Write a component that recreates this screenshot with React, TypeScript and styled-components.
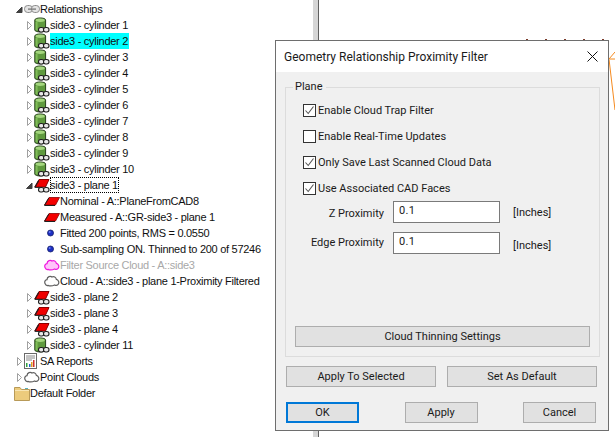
import React from "react";
import styled, { createGlobalStyle } from "styled-components";

const GlobalStyle = createGlobalStyle`
  html, body {
    margin: 0;
    padding: 0;
    background: #ffffff;
    overflow: hidden;
  }
`;

const Page = styled.div`
  position: relative;
  display: flex;
  width: 615px;
  height: 437px;
  overflow: hidden;
  background: #ffffff;
`;

const TreePane = styled.div`
  width: 313px;
  padding-top: 1px;
  font-family: "Liberation Sans", Arial, sans-serif;
  font-size: 11px;
  letter-spacing: -0.28px;
  color: #101010;
`;

const Divider = styled.div`
  width: 5px;
  background: #d6d6d6;
  border-right: 1px solid #606060;
`;

const Viewport = styled.div`
  position: relative;
  flex: 1;
`;

const Row = styled.div<{ $level: number }>`
  display: flex;
  align-items: center;
  height: 16px;
  padding-left: ${(p) => 4 + p.$level * 10}px;
  white-space: nowrap;
`;

const ArrowSlot = styled.span`
  display: flex;
  align-items: center;
  justify-content: center;
  width: 10px;
  height: 16px;
  flex: none;
`;

const IconSlot = styled.span`
  display: block;
  width: 16px;
  height: 16px;
  flex: none;
`;

const Label = styled.span<{ $selected?: boolean; $focused?: boolean; $muted?: boolean }>`
  display: block;
  height: 16px;
  line-height: 16px;
  box-sizing: border-box;
  padding: 0 1px 0 0;
  background: ${(p) => (p.$selected ? "#00ffff" : "transparent")};
  outline: ${(p) => (p.$focused ? "1px dotted #000" : "none")};
  outline-offset: -1px;
  color: ${(p) => (p.$muted ? "#a8a8a8" : "inherit")};
`;

const Dialog = styled.div`
  position: absolute;
  left: 275px;
  top: 40px;
  width: 334px;
  height: 391px;
  box-sizing: border-box;
  border: 1px solid #6e6e6e;
  background: #f0f0f0;
  display: flex;
  flex-direction: column;
  font-family: Roboto, "Noto Sans", sans-serif;
  font-size: 11px;
  color: #1a1a1a;
`;

const TitleBar = styled.div`
  display: flex;
  align-items: center;
  justify-content: space-between;
  height: 31px;
  flex: none;
  padding: 0 10px 0 8px;
  background: #ffffff;
  font-size: 12px;
`;

const Body = styled.div`
  display: flex;
  flex-direction: column;
  padding: 8px 8px 0 9px;
`;

const Group = styled.fieldset`
  margin: 0;
  padding: 0 9px 10px 9px;
  height: 277px;
  box-sizing: border-box;
  border: 1px solid #dcdcdc;
  min-width: 0;
`;

const Legend = styled.legend`
  padding: 0 3px 0 2px;
  margin-left: -2px;
  line-height: 14px;
`;

const Options = styled.div`
  display: flex;
  flex-direction: column;
  gap: 10px;
  padding: 8px 0 0 8px;
`;

const CheckRow = styled.label`
  display: flex;
  align-items: center;
  gap: 2px;
  height: 16px;
`;

const Box = styled.span`
  display: block;
  width: 13px;
  height: 13px;
  flex: none;
  box-sizing: border-box;
  border: 1px solid #333;
  background: #fff;
`;

const Fields = styled.div`
  display: grid;
  grid-template-columns: 89px 107px auto;
  column-gap: 9px;
  row-gap: 9px;
  margin-top: 5px;
  align-items: center;
`;

const FieldLabel = styled.span<{ $raised?: boolean }>`
  text-align: right;
  margin-right: 0;
  margin-top: ${(p) => (p.$raised ? 0 : 2)}px;
  margin-bottom: ${(p) => (p.$raised ? 2 : 0)}px;
`;

const FieldInput = styled.div`
  box-sizing: border-box;
  height: 22px;
  border: 1px solid #7a7a7a;
  background: #fff;
  padding: 2px 0 0 5px;
  line-height: 14px;
  letter-spacing: 0.3px;
`;

const Unit = styled.span<{ $low?: boolean }>`
  margin-left: 4px;
  margin-top: ${(p) => (p.$low ? 4 : 0)}px;
`;

const Button = styled.div<{ $primary?: boolean }>`
  display: flex;
  align-items: center;
  justify-content: center;
  box-sizing: border-box;
  height: 21px;
  background: #e1e1e1;
  border: ${(p) => (p.$primary ? "2px solid #0078d7" : "1px solid #adadad")};
`;

const ThinningButton = styled(Button)`
  margin-top: 72px;
`;

const ActionRow = styled.div`
  display: grid;
  grid-template-columns: 150px 150px;
  justify-content: space-between;
  margin: 9px 3px 0 1px;
`;

const FooterRow = styled.div`
  display: grid;
  grid-template-columns: 73px 73px 73px;
  justify-content: space-between;
  margin: 15px 4px 0 1px;
`;

const Overlay = styled.svg`
  position: absolute;
  left: 0;
  top: 0;
  display: block;
`;

const Arrow = ({ open }: { open?: boolean }) => (
  <svg width="7" height="9" viewBox="0 0 7 9">
    {open ? (
      <path d="M0.5 7.5 L6 7.5 L6 2 Z" fill="#404040" stroke="#404040" />
    ) : (
      <path d="M1.5 0.5 L5.5 4.5 L1.5 8.5 Z" fill="#fff" stroke="#a0a0a0" />
    )}
  </svg>
);

const Chain = () => (
  <g fill="#e8e8e8" stroke="#202020" strokeWidth="1.1">
    <rect x="4.5" y="10.5" width="5.5" height="4.5" rx="2.2" />
    <rect x="9.5" y="10.5" width="5.5" height="4.5" rx="2.2" />
  </g>
);

const CylinderIcon = () => (
  <svg width="16" height="16" viewBox="0 0 16 16">
    <path d="M0.8 3 C0.8 0.3 11.6 0.3 11.6 3 L11.6 13 C11.6 15.6 0.8 15.6 0.8 13 Z" fill="#5f9a3e" stroke="#26401a" />
    <ellipse cx="6.2" cy="3.2" rx="4.6" ry="1.7" fill="#a4d67e" />
    <rect x="1.6" y="5" width="2" height="8" fill="#80bc58" />
    <Chain />
  </svg>
);

const PlaneLinkIcon = () => (
  <svg width="16" height="16" viewBox="0 0 16 16">
    <path d="M0.8 10 L5 2.5 L15 2.5 L11.5 10 Z" fill="#f00000" stroke="#8a0000" />
    <path d="M0.8 10.5 L4.8 3.5" stroke="#202020" strokeWidth="1.2" />
    <rect x="1" y="10" width="5" height="1" fill="#303030" />
    <Chain />
  </svg>
);

const PlaneIcon = () => (
  <svg width="16" height="16" viewBox="0 0 16 16">
    <path d="M0.5 12 L5 4.5 L15.5 4.5 L11.5 12 Z" fill="#f40000" stroke="#8a0000" strokeWidth="0.8" />
    <path d="M0.5 12.4 L4.8 5 M0.5 12.5 L11 12.5" stroke="#202020" strokeWidth="1" />
  </svg>
);

const DotIcon = () => (
  <svg width="16" height="16" viewBox="0 0 16 16">
    <circle cx="6.5" cy="8" r="3" fill="#1c2fc4" stroke="#16206a" strokeWidth="0.8" />
    <circle cx="5.7" cy="7" r="1" fill="#6a7cf0" />
  </svg>
);

const CloudIcon = ({ pink }: { pink?: boolean }) => (
  <svg width="16" height="16" viewBox="0 0 16 16">
    <path
      d="M1 10.5 C0.2 8.5 1.4 6.8 3 6.6 C3.2 3.6 6.4 2.6 8 4 C9.8 3 12 4.2 12.4 6.4 C14.4 6.6 15.4 9.4 14.4 11 C13.6 12.6 11.8 12.6 10.5 12 C8.5 13 5.5 13 4 12.4 C2.8 12.8 1.6 12 1 10.5 Z"
      fill={pink ? "#ffc4fa" : "#ffffff"}
      stroke={pink ? "#f018e0" : "#606060"}
      strokeWidth="1.2"
    />
  </svg>
);

const LinkIcon = () => (
  <svg width="16" height="16" viewBox="0 0 16 16">
    <g fill="#e4e4e4" stroke="#8c8c8c" strokeWidth="1">
      <rect x="0.5" y="4.5" width="8" height="7" rx="3.2" />
      <rect x="7.5" y="4.5" width="8" height="7" rx="3.2" />
    </g>
    <rect x="4" y="7.5" width="8" height="1.2" fill="#707070" />
  </svg>
);

const ReportIcon = () => (
  <svg width="16" height="16" viewBox="0 0 16 16">
    <rect x="0.5" y="0.5" width="12" height="15" fill="#fff" stroke="#6a6a6a" />
    <path d="M2 3 H11 M2 5 H11 M2 7 H8" stroke="#8a8a8a" />
    <rect x="5" y="11" width="1.5" height="3" fill="#2060d0" />
    <rect x="7" y="9" width="1.5" height="5" fill="#e0a020" />
    <rect x="9" y="7" width="1.5" height="7" fill="#d03030" />
    <rect x="2" y="10" width="1.5" height="4" fill="#30a040" />
  </svg>
);

const FolderIcon = () => (
  <svg width="16" height="16" viewBox="0 0 16 16">
    <path d="M0.5 2.5 H6 L7.5 4.5 H15.5 V15.5 H0.5 Z" fill="#eccb7c" stroke="#b89a58" />
    <rect x="11" y="3" width="3" height="1" fill="#5ab0b8" />
    <rect x="1" y="5" width="14" height="1" fill="#f8e6b4" />
  </svg>
);

const Check = ({ checked }: { checked: boolean }) => (
  <Box>
    {checked && (
      <svg width="11" height="11" viewBox="0 0 11 11" style={{ display: "block" }}>
        <path d="M1.5 5.5 L4.2 8.5 L9.5 1.5" fill="none" stroke="#555" strokeWidth="1.1" />
      </svg>
    )}
  </Box>
);

type Node = {
  level: number;
  text: string;
  icon: React.ReactNode;
  arrow?: "open" | "closed";
  selected?: boolean;
  focused?: boolean;
  muted?: boolean;
};

const cylinder = (n: number, selected?: boolean): Node => ({
  level: 2,
  text: `side3 - cylinder ${n}`,
  icon: <CylinderIcon />,
  arrow: "closed",
  selected,
});

const plane = (n: number): Node => ({
  level: 2,
  text: `side3 - plane ${n}`,
  icon: <PlaneLinkIcon />,
  arrow: "closed",
});

const nodes: Node[] = [
  { level: 1, text: "Relationships", icon: <LinkIcon />, arrow: "open" },
  cylinder(1),
  cylinder(2, true),
  cylinder(3),
  cylinder(4),
  cylinder(5),
  cylinder(6),
  cylinder(7),
  cylinder(8),
  cylinder(9),
  cylinder(10),
  { level: 2, text: "side3 - plane 1", icon: <PlaneLinkIcon />, arrow: "open", focused: true },
  { level: 3, text: "Nominal - A::PlaneFromCAD8", icon: <PlaneIcon /> },
  { level: 3, text: "Measured - A::GR-side3 - plane 1", icon: <PlaneIcon /> },
  { level: 3, text: "Fitted 200 points, RMS = 0.0550", icon: <DotIcon /> },
  { level: 3, text: "Sub-sampling ON. Thinned to 200 of 57246", icon: <DotIcon /> },
  { level: 3, text: "Filter Source Cloud - A::side3", icon: <CloudIcon pink />, muted: true },
  { level: 3, text: "Cloud - A::side3 - plane 1-Proximity Filtered", icon: <CloudIcon /> },
  plane(2),
  plane(3),
  plane(4),
  cylinder(11),
  { level: 1, text: "SA Reports", icon: <ReportIcon />, arrow: "closed" },
  { level: 1, text: "Point Clouds", icon: <CloudIcon />, arrow: "closed" },
  { level: 0, text: "Default Folder", icon: <FolderIcon /> },
];

const options = [
  { text: "Enable Cloud Trap Filter", checked: true },
  { text: "Enable Real-Time Updates", checked: false },
  { text: "Only Save Last Scanned Cloud Data", checked: true },
  { text: "Use Associated CAD Faces", checked: true },
];

export default function App() {
  return (
    <Page>
      <GlobalStyle />
      <TreePane>
        {nodes.map((node) => (
          <Row key={node.text} $level={node.level}>
            <ArrowSlot>{node.arrow && <Arrow open={node.arrow === "open"} />}</ArrowSlot>
            <IconSlot>{node.icon}</IconSlot>
            <Label $selected={node.selected} $focused={node.focused} $muted={node.muted}>
              {node.text}
            </Label>
          </Row>
        ))}
      </TreePane>
      <Divider />
      <Viewport>
        <Overlay width="296" height="437" viewBox="319 0 296 437">
          <path d="M526 39.5 H608" stroke="#7a3a2a" strokeWidth="1" strokeDasharray="2 17" fill="none" />
          <path d="M609 59 L615 52 M609 59 L615 110 M610 59 H615" stroke="#f58a1f" strokeWidth="1" fill="none" />
        </Overlay>
      </Viewport>
      <Dialog>
        <TitleBar>
          <span>Geometry Relationship Proximity Filter</span>
          <svg width="11" height="11" viewBox="0 0 11 11">
            <path d="M0.5 0.5 L10.5 10.5 M10.5 0.5 L0.5 10.5" stroke="#111" strokeWidth="1" />
          </svg>
        </TitleBar>
        <Body>
          <Group>
            <Legend>Plane</Legend>
            <Options>
              {options.map((o) => (
                <CheckRow key={o.text}>
                  <Check checked={o.checked} />
                  <span>{o.text}</span>
                </CheckRow>
              ))}
            </Options>
            <Fields>
              <FieldLabel>Z Proximity</FieldLabel>
              <FieldInput>0.1</FieldInput>
              <Unit>[Inches]</Unit>
              <FieldLabel $raised>Edge Proximity</FieldLabel>
              <FieldInput>0.1</FieldInput>
              <Unit $low>[Inches]</Unit>
            </Fields>
            <ThinningButton>Cloud Thinning Settings</ThinningButton>
          </Group>
          <ActionRow>
            <Button>Apply To Selected</Button>
            <Button>Set As Default</Button>
          </ActionRow>
          <FooterRow>
            <Button $primary>OK</Button>
            <Button>Apply</Button>
            <Button>Cancel</Button>
          </FooterRow>
        </Body>
      </Dialog>
    </Page>
  );
}
